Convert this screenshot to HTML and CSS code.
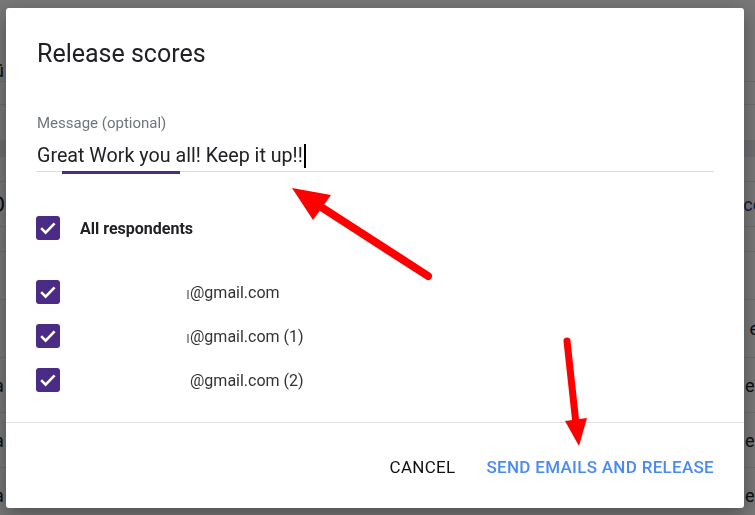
FILE: index.html
```html
<!DOCTYPE html>
<html lang="en">
<head>
  <meta charset="UTF-8" />
  <meta name="viewport" content="width=device-width, initial-scale=1.0">
  <title>Release scores</title>
  <link rel="stylesheet" href="styles.css">
</head>
<body>
  <!-- page behind the dialog -->
  <div class="page">
    <div class="pg-head"><span class="pg-left">ü</span></div>
    <div class="pg-row small"></div>
    <div class="pg-gap"></div>
    <div class="pg-band"></div>
    <div class="pg-row short"></div>
    <div class="pg-row tall"><span class="pg-left big">O</span><span class="pg-right link">co</span></div>
    <div class="pg-row short"></div>
    <div class="pg-row med"></div>
    <div class="pg-row tall2"><span class="pg-left"></span><span class="pg-right">e</span></div>
    <div class="pg-row rowx"><span class="pg-left">a</span><span class="pg-right">el</span></div>
    <div class="pg-row rowx"><span class="pg-left">a</span><span class="pg-right">el</span></div>
    <div class="pg-row rowx"><span class="pg-left">a</span><span class="pg-right">el</span></div>
  </div>

  <div class="overlay">
    <div class="dialog">
      <h1 class="dialog-title">Release scores</h1>

      <div class="field">
        <label class="field-label" for="msg">Message (optional)</label>
        <div class="field-input">
          <span id="msg">Great Work you all! Keep it up!!</span><span class="caret"></span>
          <span class="focus-bar"></span>
        </div>
      </div>

      <div class="check-row all">
        <span class="box"><svg viewBox="0 0 24 24"><path d="M5.2 12.2l4.4 4.4 9-9.2" /></svg></span>
        <span class="check-label">All respondents</span>
      </div>

      <div class="list">
        <div class="check-row">
          <span class="box"><svg viewBox="0 0 24 24"><path d="M5.2 12.2l4.4 4.4 9-9.2" /></svg></span>
          <span class="email"><i class="cut"></i>@gmail.com</span>
        </div>
        <div class="check-row">
          <span class="box"><svg viewBox="0 0 24 24"><path d="M5.2 12.2l4.4 4.4 9-9.2" /></svg></span>
          <span class="email"><i class="cut"></i>@gmail.com (1)</span>
        </div>
        <div class="check-row">
          <span class="box"><svg viewBox="0 0 24 24"><path d="M5.2 12.2l4.4 4.4 9-9.2" /></svg></span>
          <span class="email">@gmail.com (2)</span>
        </div>
      </div>

      <div class="actions">
        <button class="btn">CANCEL</button>
        <button class="btn primary">SEND EMAILS AND RELEASE</button>
      </div>
    </div>
  </div>

  <!-- annotation arrows drawn over the screenshot -->
  <svg class="arrows" width="755" height="515" viewBox="0 0 755 515">
    <line x1="428" y1="276" x2="318" y2="205" stroke="#ff0000" stroke-width="8" stroke-linecap="round" />
    <polygon points="292,188 331,195 313,220" fill="#ff0000" />
    <line x1="567" y1="341" x2="576" y2="424" stroke="#ff0000" stroke-width="7" stroke-linecap="round" />
    <polygon points="565,421 587,418 579,446" fill="#ff0000" />
  </svg>
</body>
</html>
```

FILE: styles.css
```css
* {
  box-sizing: border-box;
}
body {
  margin: 0;
  width: 755px;
  height: 515px;
  overflow: hidden;
  font-family: Roboto, 'Noto Sans', Arial, sans-serif;
  background: #fff;
  color: #202124;
}

/* background page */
.page {
  display: flex;
  flex-direction: column;
}
.pg-head {
  height: 82px;
  border-bottom: 1px solid #e6e6e6;
  display: flex;
  align-items: flex-end;
}
.pg-row {
  display: flex;
  justify-content: space-between;
  align-items: center;
  border-bottom: 1px solid #e6e6e6;
  font-size: 18px;
  color: #202124;
}
.pg-row.small { height: 23px; }
.pg-gap { height: 35px; }
.pg-band { height: 17px; background: #ececf3; }
.pg-row.short { height: 25px; }
.pg-row.tall { height: 45px; }
.pg-row.med { height: 48px; }
.pg-row.tall2 { height: 58px; }
.pg-row.rowx { height: 55px; }
.pg-left {
  margin-left: -6px;
  font-size: 18px;
}
.pg-left.big { font-size: 22px; margin-left: -10px; }
.pg-right { margin-right: -4px; }
.pg-right.link { color: #1a3d9a; margin-right: -8px; }

/* overlay + dialog */
.overlay {
  position: fixed;
  inset: 0;
  background: rgba(0, 0, 0, 0.535);
  padding: 8px 11px 7px 6px;
  display: flex;
}
.dialog {
  flex: 1;
  background: #fff;
  border-radius: 3px;
  box-shadow: 0 6px 20px rgba(0, 0, 0, 0.35);
  display: flex;
  flex-direction: column;
  padding-top: 30px;
}
.dialog-title {
  margin: 0 30px 0 31px;
  font-size: 25px;
  line-height: 32px;
  font-weight: 400;
  color: #202124;
}

.field {
  margin: 43px 30px 0 30px;
  display: flex;
  flex-direction: column;
}
.field-label {
  padding-left: 1px;
  font-size: 15px;
  line-height: 20px;
  color: #70757a;
}
.field-input {
  position: relative;
  margin-top: 11px;
  padding: 0 0 3px 1px;
  font-size: 19.7px;
  line-height: 24px;
  color: #202124;
  border-bottom: 1px solid #dadce0;
  display: flex;
  align-items: center;
}
.caret {
  display: inline-block;
  width: 2px;
  height: 24px;
  background: #000;
  margin-left: 1px;
}
.focus-bar {
  position: absolute;
  left: 26px;
  bottom: -3px;
  width: 118px;
  height: 3px;
  background: #4a2c86;
}

.check-row {
  display: flex;
  align-items: center;
  height: 24px;
  margin-left: 30px;
}
.check-row.all {
  margin-top: 44px;
}
.box {
  width: 24px;
  height: 24px;
  border-radius: 3px;
  background: #4a2c86;
  display: flex;
  align-items: center;
  justify-content: center;
  flex-shrink: 0;
}
.box svg {
  width: 24px;
  height: 24px;
  fill: none;
  stroke: #fff;
  stroke-width: 2.6;
}
.check-label {
  margin-left: 20px;
  font-size: 16px;
  font-weight: 700;
  color: #202124;
}
.list {
  margin-top: 40px;
  display: flex;
  flex-direction: column;
  gap: 20px;
}
.email {
  margin-left: 130px;
  font-size: 16px;
  color: #333;
  display: flex;
  align-items: center;
}
.cut {
  display: inline-block;
  width: 2px;
  height: 9px;
  margin: 4px 1px 0 -3px;
  background: #999;
}

.actions {
  margin-top: auto;
  border-top: 1px solid #e0e0e0;
  height: 86px;
  display: flex;
  align-items: center;
  justify-content: flex-end;
  gap: 31px;
  padding: 2px 30px 0 0;
}
.btn {
  border: 0;
  background: none;
  padding: 0;
  font-family: inherit;
  font-size: 17px;
  letter-spacing: 0.3px;
  color: #111;
  cursor: pointer;
}
.btn.primary {
  font-weight: 500;
  color: #4a8af4;
}

.arrows {
  position: fixed;
  left: 0;
  top: 0;
  pointer-events: none;
}
```
